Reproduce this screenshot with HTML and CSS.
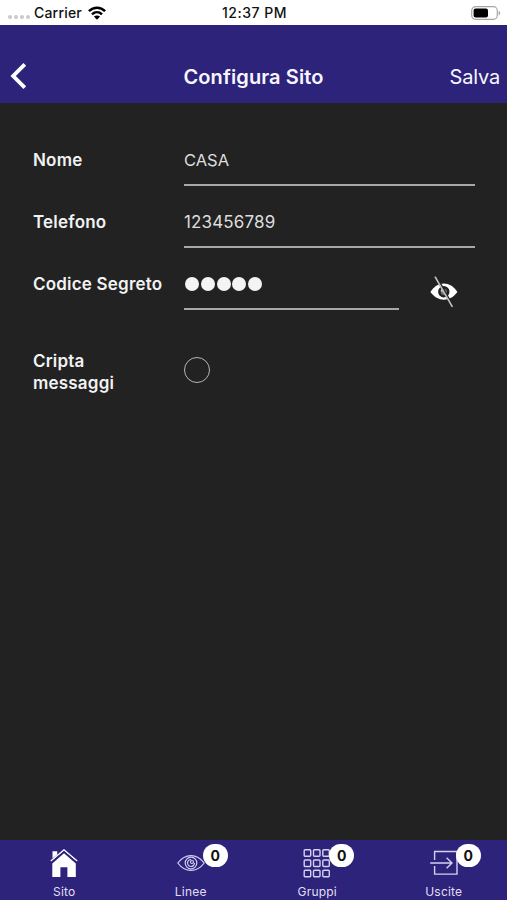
FILE: index.html
```html
<!DOCTYPE html>
<html lang="it">
<head>
<meta charset="utf-8">
<title>Configura Sito</title>
<link rel="stylesheet" href="styles.css">
</head>
<body>
<div class="app">
  <div class="status">
    <div class="carrier">
      <span class="signal"><i></i><i></i><i></i><i></i></span>
      <span class="carrier-name">Carrier</span>
      <svg class="wifi" width="18" height="14" viewBox="0 0 18 14" fill="none" stroke="#000" stroke-width="2.5">
        <path d="M.9 5.2C5.6.6 12.4.6 17.1 5.2M4 8.4c2.9-2.8 7.1-2.8 10 0"/>
        <path d="M9 13.8L5.9 10.6c1.8-1.6 4.4-1.6 6.2 0z" fill="#000" stroke="none"/>
      </svg>
    </div>
    <span class="clock">12:37 PM</span>
    <svg class="battery" width="30" height="14" viewBox="0 0 30 14">
      <rect x=".7" y=".7" width="25.6" height="12.6" rx="3.8" fill="none" stroke="#a6a6a6" stroke-width="1.2"/>
      <rect x="2.6" y="2.4" width="14.4" height="9.2" rx="2" fill="#000"/>
      <path d="M27.7 4.7c2 .8 2 3.8 0 4.6z" fill="#a6a6a6"/>
    </svg>
  </div>
  <header class="header">
    <svg class="back" width="18" height="28" viewBox="0 0 18 28" fill="none" stroke="#fff" stroke-width="3.9"><path d="M14.8 2.3L3.2 14l11.6 11.7"/></svg>
    <h1 class="title">Configura Sito</h1>
    <span class="save">Salva</span>
  </header>
  <main class="form">
    <div class="row">
      <span class="label">Nome</span>
      <span class="field">CASA</span>
    </div>
    <div class="row">
      <span class="label">Telefono</span>
      <span class="field number">123456789</span>
    </div>
    <div class="row">
      <span class="label">Codice Segreto</span>
      <span class="field secret"><i></i><i></i><i></i><i></i><i></i></span>
      <svg class="hide" width="28" height="32" viewBox="0 0 28 32">
        <path d="M.4 16C7.8 4.8 20 4.8 27.4 16 20 26.2 7.8 26.2.4 16z" fill="#fff"/>
        <circle cx="13.8" cy="15.8" r="4.4" fill="#777" stroke="#222" stroke-width="2.6"/>
        <circle cx="12.4" cy="14.2" r="1.5" fill="#ddd"/>
        <path d="M6 .6L23 30.8" stroke="#222" stroke-width="2.6"/>
        <path d="M5 .6L22.4 30.8" stroke="#c4c4c4" stroke-width="1.6"/>
      </svg>
    </div>
    <div class="row check-row">
      <span class="label">Cripta<br>messaggi</span>
      <span class="radio"></span>
    </div>
  </main>
  <nav class="tabs">
    <div class="tab">
      <div class="icon">
        <svg width="28" height="30" viewBox="0 0 28 30">
          <path d="M2.5 9.4V2.2h4.7v3.4z" fill="#fff"/>
          <path d="M2.3 14.6L14 4.3l11.8 10.3V28h-8.4v-9.7h-7V28H2.3z" fill="#fff"/>
          <path d="M.8 12L14 .9 27.2 12" fill="none" stroke="#fff" stroke-width="1.4"/>
          <path d="M1.4 13.2L14 2.5l12.6 10.7" fill="none" stroke="#2d237a" stroke-width="1"/>
        </svg>
      </div>
      <span class="name">Sito</span>
    </div>
    <div class="tab">
      <div class="icon">
        <svg width="28" height="30" viewBox="0 0 28 30" fill="none" stroke="#d5d0f2" stroke-width="1.2">
          <path d="M.8 14C8.2 4.1 19.8 4.1 27.2 14 19.8 23.9 8.2 23.9.8 14z"/>
          <circle cx="14" cy="14" r="5.8"/>
          <path d="M14.2 10.5a3.5 3.5 0 1 0 3.3 3.5"/>
          <circle cx="15" cy="13" r="1.5"/>
        </svg>
        <span class="badge">0</span>
      </div>
      <span class="name">Linee</span>
    </div>
    <div class="tab">
      <div class="icon">
        <svg width="28" height="30" viewBox="0 0 28 30" fill="none" stroke="#d5d0f2" stroke-width="1.4">
          <rect x="1.2" y=".8" width="6.5" height="6.5" rx="1"/><rect x="10.5" y=".8" width="6.5" height="6.5" rx="1"/><rect x="19.8" y=".8" width="6.5" height="6.5" rx="1"/>
          <rect x="1.2" y="11" width="6.5" height="6.5" rx="1"/><rect x="10.5" y="11" width="6.5" height="6.5" rx="1"/><rect x="19.8" y="11" width="6.5" height="6.5" rx="1"/>
          <rect x="1.2" y="21.2" width="6.5" height="6.5" rx="1"/><rect x="10.5" y="21.2" width="6.5" height="6.5" rx="1"/><rect x="19.8" y="21.2" width="6.5" height="6.5" rx="1"/>
        </svg>
        <span class="badge">0</span>
      </div>
      <span class="name">Gruppi</span>
    </div>
    <div class="tab">
      <div class="icon">
        <svg width="28" height="30" viewBox="0 0 28 30" fill="none" stroke="#d5d0f2" stroke-width="1.4">
          <path d="M4.6 11V2.5h22.4v22.6H4.6v-8"/>
          <path d="M.2 14h21.6M16.6 8.7l5.4 5.3-5.4 5.3"/>
        </svg>
        <span class="badge">0</span>
      </div>
      <span class="name">Uscite</span>
    </div>
  </nav>
</div>
</body>
</html>
```
FILE: styles.css
```css
* { box-sizing: border-box; }
body {
  margin: 0;
  background: #222;
  color: #f2f2f2;
  font-family: Inter, "Liberation Sans", sans-serif;
}
.app { display: flex; flex-direction: column; height: 900px; width: 507px; }

.status {
  display: grid;
  grid-template-columns: 1fr auto 1fr;
  align-items: center;
  height: 25px;
  padding: 0 6px 0 8px;
  background: #fff;
  color: #111;
  font-size: 14px;
  font-weight: 500;
}
.carrier { display: flex; align-items: center; }
.signal { display: flex; gap: 2px; margin: 8px 4px 0 0; }
.signal i { width: 4px; height: 4px; border-radius: 50%; background: #c9c9c9; }
.carrier-name { width: 48px; letter-spacing: 0.2px; white-space: nowrap; }
.wifi { margin-left: 6px; }
.clock { letter-spacing: 0.5px; white-space: nowrap; }
.battery { justify-self: end; }

.header {
  display: grid;
  grid-template-columns: 1fr auto 1fr;
  align-items: center;
  height: 78px;
  padding: 25px 8px 0 10px;
  background: #2d237a;
  color: #f7f6ff;
}
.back { margin-top: -2px; }
.title { margin: 0 1px 0 -1px; font-size: 20px; line-height: 26px; font-weight: 600; letter-spacing: 0.1px; white-space: nowrap; }
.save { justify-self: end; margin-right: -1px; font-size: 20px; line-height: 26px; letter-spacing: -0.2px; }

.form { flex: 1; padding: 40px 32px 0 33px; }
.row { display: flex; height: 62.2px; font-size: 16.5px; line-height: 22px; }
.label { width: 151px; padding-top: 6px; font-size: 17px; font-weight: 600; letter-spacing: 0.2px; white-space: nowrap; }
.field {
  flex: 1;
  height: 43px;
  padding-top: 6px;
  border-bottom: 2px solid #a8a8a8;
  color: #dedede;
}
.number { font-size: 17px; letter-spacing: 0.15px; }
.secret { display: flex; flex: 0 0 215px; align-items: flex-start; gap: 1.8px; padding: 10px 0 0 1px; }
.secret i { width: 14px; height: 14px; border-radius: 50%; background: #f4f4f4; }
.hide { margin: 9px 0 0 31px; }
.check-row { padding-top: 14.5px; }
.radio { width: 26px; height: 26px; margin-top: 13px; border: 1.4px solid #b5b5b5; border-radius: 50%; }

.tabs { display: grid; grid-template-columns: repeat(4, 1fr); height: 60px; padding-left: 1px; background: #2d237a; }
.tab { display: flex; flex-direction: column; align-items: center; padding-top: 9px; }
.icon { position: relative; width: 28px; height: 30px; }
.icon svg { display: block; }
.badge {
  position: absolute;
  left: 26px;
  top: -5px;
  width: 25px;
  height: 23px;
  border-radius: 12px;
  background: #fff;
  color: #111;
  font-size: 14px;
  line-height: 23px;
  font-weight: 700;
  text-align: center;
}
.name { margin-top: 5px; font-size: 12px; line-height: 16px; letter-spacing: 0.2px; color: #e2dff5; }
```
